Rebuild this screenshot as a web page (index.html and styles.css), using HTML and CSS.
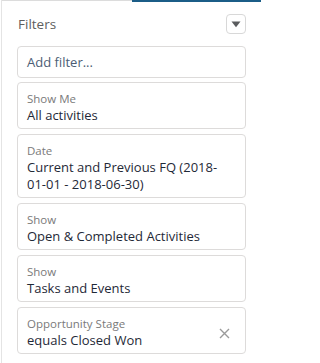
FILE: index.html
```html
<!DOCTYPE html>
<html>
<head>
<meta charset="utf-8">
<link rel="stylesheet" href="styles.css">
</head>
<body>
<div class="panel">
  <div class="topline"><span class="tl-gray"></span><span class="tl-blue"></span></div>
  <div class="content">
    <div class="header">
      <span class="title">Filters</span>
      <button class="menu-btn" type="button" aria-label="Filter menu">
        <svg width="10" height="7" viewBox="0 0 10 7"><path d="M0.5 0.5 L9.5 0.5 L5 6.2 Z" fill="#5a5c5e"/></svg>
      </button>
    </div>
    <div class="card add">Add filter...</div>
    <div class="card">
      <div class="label">Show Me</div>
      <div class="value">All activities</div>
    </div>
    <div class="card">
      <div class="label">Date</div>
      <div class="value">Current and Previous FQ (2018-01-01 - 2018-06-30)</div>
    </div>
    <div class="card">
      <div class="label">Show</div>
      <div class="value">Open &amp; Completed Activities</div>
    </div>
    <div class="card">
      <div class="label">Show</div>
      <div class="value">Tasks and Events</div>
    </div>
    <div class="card removable">
      <div class="text">
        <div class="label">Opportunity Stage</div>
        <div class="value">equals Closed Won</div>
      </div>
      <svg class="close" width="11" height="11" viewBox="0 0 11 11"><path d="M1 1 L10 10 M10 1 L1 10" stroke="#9a9a9a" stroke-width="1.4" fill="none"/></svg>
    </div>
  </div>
</div>
</body>
</html>
```
FILE: styles.css
```css
html, body {
  margin: 0;
  padding: 0;
  background: #ffffff;
}
body {
  font-family: "Open Sans", "Liberation Sans", sans-serif;
  padding-left: 1px;
  width: 261px;
  box-sizing: border-box;
}
.panel {
  width: 260px;
  border-left: 1px solid #e4e4e4;
  min-height: 363px;
  box-sizing: border-box;
}
.topline {
  display: flex;
  height: 2px;
}
.tl-gray {
  width: 130px;
  border-top: 1px solid #dcdcdc;
}
.tl-blue {
  flex: 1;
  background: #1b5d87;
}
.content {
  padding: 12px 15px 0 15px;
}
.header {
  display: flex;
  align-items: center;
  justify-content: space-between;
  height: 20px;
  margin-bottom: 12px;
}
.title {
  font-size: 13.5px;
  color: #5e5e5e;
  padding-left: 1px;
}
.menu-btn {
  width: 20px;
  height: 20px;
  padding: 0;
  border: 1px solid #d8d8d8;
  border-radius: 4px;
  background: #fff;
  display: flex;
  align-items: center;
  justify-content: center;
}
.card {
  border: 1px solid #dddbda;
  border-radius: 4px;
  background: #fff;
  padding: 8px 16px 4px 9px;
  margin-bottom: 5px;
}
.card.add {
  box-sizing: border-box;
  height: 32px;
  padding: 0 8px 0 9px;
  margin-bottom: 4px;
  display: flex;
  align-items: center;
  font-size: 13px;
  color: #4b5d74;
}
.label {
  font-size: 11.5px;
  line-height: 16px;
  color: #7a7a7a;
}
.value {
  font-size: 13px;
  line-height: 17px;
  color: #1f2937;
}
.removable {
  display: flex;
  align-items: center;
  justify-content: space-between;
  padding-right: 8px;
}
.close {
  margin-right: 7px;
  margin-top: 2px;
}
```
